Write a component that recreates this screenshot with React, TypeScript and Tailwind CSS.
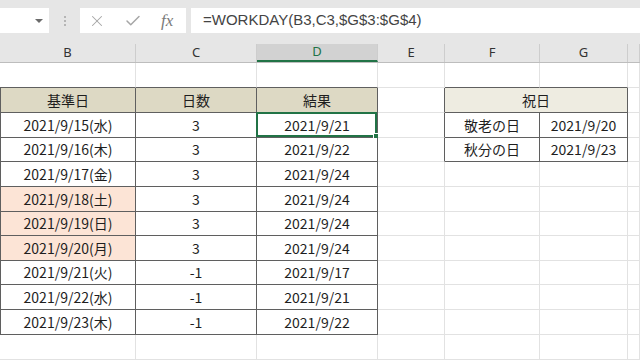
import { Check, X } from "lucide-react";

const cols = ["B", "C", "D", "E", "F", "G", ""];
const colW = ["w-[136px]", "w-[121px]", "w-[121px]", "w-[67px]", "w-[95px]", "w-[88px]", "flex-1"];
// row number -> height (incl. bottom grid line)
const rowH: Record<number, string> = {
  2: "h-[25px]", 3: "h-[25px]", 4: "h-[25px]", 5: "h-[24px]", 6: "h-[25px]", 7: "h-[25px]",
  8: "h-[24px]", 9: "h-[25px]", 10: "h-[24px]", 11: "h-[25px]", 12: "h-[25px]", 13: "h-[25px]",
};

const data: [string, string, string, boolean][] = [
  ["2021/9/15(水)", "3", "2021/9/21", false],
  ["2021/9/16(木)", "3", "2021/9/22", false],
  ["2021/9/17(金)", "3", "2021/9/24", false],
  ["2021/9/18(土)", "3", "2021/9/24", true],
  ["2021/9/19(日)", "3", "2021/9/24", true],
  ["2021/9/20(月)", "3", "2021/9/24", true],
  ["2021/9/21(火)", "-1", "2021/9/17", false],
  ["2021/9/22(水)", "-1", "2021/9/21", false],
  ["2021/9/23(木)", "-1", "2021/9/22", false],
];

const holidays = [
  ["敬老の日", "2021/9/20"],
  ["秋分の日", "2021/9/23"],
];

type CellProps = {
  w: string;
  right: boolean;
  bottom: boolean;
  left?: boolean;
  bg?: string;
  children?: React.ReactNode;
  active?: boolean;
};

const Cell = ({ w, right, bottom, left, bg, children, active }: CellProps) => (
  <div
    className={[
      w,
      "relative flex h-full shrink-0 items-center justify-center border-r border-b",
      right ? "border-r-[#5f5f5f]" : "border-r-[#e2e2e2]",
      bottom ? "border-b-[#5f5f5f]" : "border-b-[#e2e2e2]",
      left ? "border-l border-l-[#5f5f5f]" : "",
      bg ?? "bg-white",
    ].join(" ")}
  >
    {children}
    {active && (
      <div className="absolute -top-[1px] -left-[1px] right-0 bottom-0 border-2 border-[#217346]">
        <div className="absolute -right-[4px] -bottom-[4px] h-[6px] w-[6px] border border-white bg-[#217346]" />
      </div>
    )}
  </div>
);

const SheetRow = ({ r }: { r: number }) => {
  const inMain = r >= 3 && r <= 12;
  const inHol = r >= 3 && r <= 5;
  const item = inMain && r >= 4 ? data[r - 4] : null;
  const hol = r >= 4 && r <= 5 ? holidays[r - 4] : null;

  const mainBottom = r >= 2 && r <= 12;
  const holBottom = r >= 2 && r <= 5;

  return (
    <div className={`flex ${rowH[r]}`}>
      {/* B */}
      <Cell
        w={colW[0]}
        right={inMain}
        bottom={mainBottom}
        left={inMain}
        bg={r === 3 ? "bg-[#ddd9c4]" : item?.[3] ? "bg-[#fce4d6]" : "bg-white"}
      >
        {r === 3 ? "基準日" : item?.[0]}
      </Cell>
      {/* C */}
      <Cell w={colW[1]} right={inMain} bottom={mainBottom} bg={r === 3 ? "bg-[#ddd9c4]" : "bg-white"}>
        {r === 3 ? "日数" : item?.[1]}
      </Cell>
      {/* D */}
      <Cell
        w={colW[2]}
        right={inMain}
        bottom={mainBottom}
        bg={r === 3 ? "bg-[#ddd9c4]" : "bg-white"}
        active={r === 4}
      >
        {r === 3 ? "結果" : item?.[2]}
      </Cell>
      {/* E */}
      <Cell w={colW[3]} right={inHol} bottom={false} />
      {/* F, G */}
      {r === 3 ? (
        <Cell w="w-[183px]" right bottom bg="bg-[#eeece1]">
          祝日
        </Cell>
      ) : (
        <>
          <Cell w={colW[4]} right={inHol} bottom={holBottom}>
            {hol?.[0]}
          </Cell>
          <Cell w={colW[5]} right={inHol} bottom={holBottom}>
            {hol?.[1]}
          </Cell>
        </>
      )}
      {/* H */}
      <Cell w={colW[6]} right={false} bottom={false} />
    </div>
  );
};

export default function App() {
  return (
    <div className="h-[360px] w-[640px] overflow-hidden bg-white font-['Noto_Sans_CJK_JP',sans-serif] text-[14px] text-[#1e1e1e]">
      {/* formula bar */}
      <div className="flex h-[44px] items-start bg-[#e6e6e6] pt-[8px]">
        <div className="flex h-[25px] w-[49px] items-center justify-end bg-white pr-[6px]">
          <div className="h-0 w-0 border-x-[4px] border-t-[4px] border-x-transparent border-t-[#6b6b6b]" />
        </div>
        <div className="flex h-[25px] w-[31px] flex-col items-center justify-center gap-[2px]">
          <div className="h-[2px] w-[2px] bg-[#b5b5b5]" />
          <div className="h-[2px] w-[2px] bg-[#b5b5b5]" />
          <div className="h-[2px] w-[2px] bg-[#b5b5b5]" />
        </div>
        <div className="flex h-[25px] w-[106px] items-center bg-white pl-[8px] text-[#a6a6a6]">
          <X size={18} strokeWidth={1.4} />
          <Check size={18} strokeWidth={2} className="ml-[18px]" />
          <span className="ml-[19px] font-['Liberation_Serif',serif] text-[17px] italic text-[#7a7a7a]">fx</span>
        </div>
        <div className="ml-[5px] flex h-[25px] flex-1 items-center bg-white pl-[12px] font-['Liberation_Sans',sans-serif] text-[15px] text-[#444]">
          =WORKDAY(B3,C3,$G$3:$G$4)
        </div>
      </div>
      {/* column headers */}
      <div className="flex h-[19px] border-b border-[#bdbdbd] bg-[#e6e6e6] font-['Noto_Sans',sans-serif] text-[13px] text-[#333]">
        {cols.map((c, i) => (
          <div
            key={i}
            className={[
              colW[i],
              "flex shrink-0 items-center justify-center border-r border-[#cdcdcd]",
              c === "D" ? "border-b-2 border-b-[#217346] bg-[#d2d2d2] text-[#217346]" : "",
            ].join(" ")}
          >
            {c}
          </div>
        ))}
      </div>
      {[2, 3, 4, 5, 6, 7, 8, 9, 10, 11, 12, 13].map((r) => (
        <SheetRow key={r} r={r} />
      ))}
    </div>
  );
}
